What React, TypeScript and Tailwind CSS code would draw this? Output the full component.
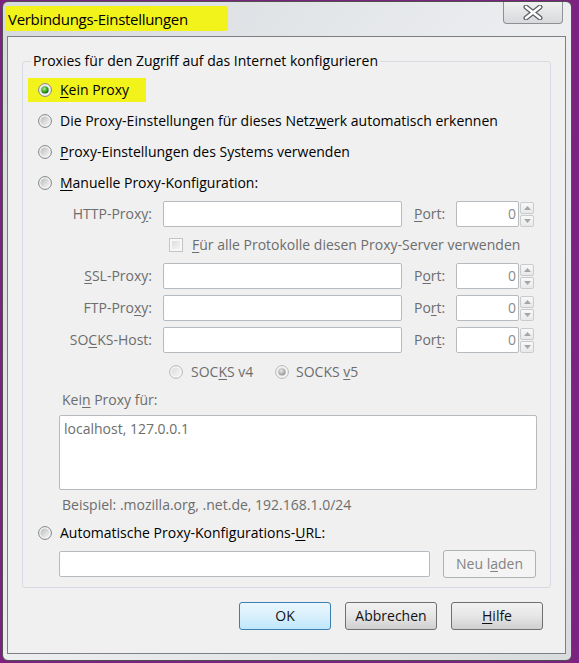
import React from 'react';

const font = { fontFamily: '"Open Sans", "Noto Sans", sans-serif' };

function Radio({ checked = false, disabled = false }: { checked?: boolean; disabled?: boolean }) {
  const ring = disabled ? '#b4b7ba' : '#7f8183';
  return (
    <svg width="14" height="14" viewBox="0 0 14 14" className="shrink-0">
      <defs>
        <linearGradient id="rfill" x1="0" y1="0" x2="1" y2="1">
          <stop offset="0" stopColor="#b9bbbd" />
          <stop offset="1" stopColor="#f7f7f7" />
        </linearGradient>
        <linearGradient id="rfilld" x1="0" y1="0" x2="1" y2="1">
          <stop offset="0" stopColor="#d9dadb" />
          <stop offset="1" stopColor="#f7f7f7" />
        </linearGradient>
        <radialGradient id="rgreen" cx="0.4" cy="0.35" r="0.7">
          <stop offset="0" stopColor="#b6f59c" />
          <stop offset="0.5" stopColor="#3fae24" />
          <stop offset="1" stopColor="#0f5d06" />
        </radialGradient>
        <radialGradient id="rgray" cx="0.4" cy="0.35" r="0.7">
          <stop offset="0" stopColor="#e8e8e8" />
          <stop offset="1" stopColor="#8c8c8c" />
        </radialGradient>
      </defs>
      <circle cx="7" cy="7" r="6.4" fill="#f5f5f5" stroke={ring} strokeWidth="1" />
      <circle cx="7" cy="7" r="4.6" fill={disabled ? 'url(#rfilld)' : 'url(#rfill)'} />
      {checked && (
        <circle cx="7" cy="7" r="3.6" fill={disabled ? 'url(#rgray)' : 'url(#rgreen)'} />
      )}
    </svg>
  );
}

function Checkbox() {
  return (
    <div className="w-[14px] h-[14px] shrink-0 border border-[#c2c4c6] bg-[#f7f7f7] p-[2px]">
      <div className="w-full h-full bg-gradient-to-br from-[#dedede] to-[#f4f4f4]" />
    </div>
  );
}

function Field({ w }: { w: string }) {
  return <div className={`${w} h-[26px] bg-white border border-[#b6bbbf] rounded-[2px]`} />;
}

function PortSpin() {
  return (
    <div className="flex items-center">
      <div className="w-[63px] h-[26px] bg-white border border-[#b6bbbf] rounded-[2px] flex items-center justify-end pr-[2px] text-[#8a8a8a]">
        0
      </div>
      <div className="flex flex-col gap-[1px] ml-[1px]">
        <div className="w-[14px] h-[12px] border border-[#c9cccf] rounded-[2px] bg-gradient-to-b from-[#f8f8f8] to-[#e9e9e9] flex items-center justify-center">
          <svg width="7" height="4" viewBox="0 0 7 4"><path d="M0 4 L3.5 0 L7 4 Z" fill="#a4a7aa" /></svg>
        </div>
        <div className="w-[14px] h-[12px] border border-[#c9cccf] rounded-[2px] bg-gradient-to-b from-[#f8f8f8] to-[#e9e9e9] flex items-center justify-center">
          <svg width="7" height="4" viewBox="0 0 7 4"><path d="M0 0 L7 0 L3.5 4 Z" fill="#a4a7aa" /></svg>
        </div>
      </div>
    </div>
  );
}

function ProxyRow({ label, port }: { label: React.ReactNode; port: React.ReactNode }) {
  return (
    <div className="h-[32px] flex items-center pl-[22px] text-[#6d6d6d]">
      <div className="w-[92px] text-right whitespace-nowrap">{label}</div>
      <div className="ml-[11px]">
        <Field w="w-[239px]" />
      </div>
      <div className="ml-[12px] w-[42px]">{port}</div>
      <PortSpin />
    </div>
  );
}

function Button({ children, primary = false }: { children: React.ReactNode; primary?: boolean }) {
  return (
    <div
      className={`w-[92px] h-[28px] rounded-[3px] border flex items-center justify-center text-[#111] ${
        primary
          ? 'border-[#3c7fb1] bg-gradient-to-b from-[#eaf6fd] via-[#d9f0fc] to-[#bee6fd]'
          : 'border-[#707070] bg-gradient-to-b from-[#f2f2f2] via-[#e6e6e6] to-[#cfcfcf]'
      }`}
    >
      {children}
    </div>
  );
}

export default function App() {
  return (
    <div className="w-[579px] h-[663px] bg-[#7c2380] pt-[1px] pl-[2px] text-[14px] leading-[20px]" style={font}>
      <div className="w-[570px] h-[660px] rounded-[6px] border border-[#4f4f4f] bg-gradient-to-br from-[#d6d9de] via-[#eceef0] to-[#d9dcdf]">
        {/* title bar */}
        <div className="h-[34px] flex items-start justify-between">
          <div className="ml-[2px] mt-[4px] h-[25px] w-[223px] bg-[#f3f31c] rounded-[3px] flex items-center pl-[3px] text-[15px] tracking-[-0.3px] text-black">
            Verbindungs-Einstellungen
          </div>
          <div className="mr-[8px] w-[60px] h-[22px] rounded-b-[4px] border border-t-0 border-[#8d9095] bg-gradient-to-b from-[#f0f0f0] to-[#d8d9db] flex items-center justify-center">
            <svg width="22" height="15" viewBox="0 0 22 15">
              <path d="M4 2 L18 13 M18 2 L4 13" stroke="#5a5d62" strokeWidth="5" strokeLinecap="round" />
              <path d="M4 2 L18 13 M18 2 L4 13" stroke="#ffffff" strokeWidth="2.6" strokeLinecap="round" />
            </svg>
          </div>
        </div>

        {/* client area */}
        <div className="ml-[4px] w-[559px] h-[618px] border border-[#7d7f82] bg-[#f0f0f0]">
          <fieldset className="mx-[14px] mt-[14px] border border-[#d5dbe0] rounded-[3px] pl-[15px] pr-[10px] pb-[9px] pt-[3px]">
            <legend className="ml-[-7px] px-[2px] text-black">Proxies für den Zugriff auf das Internet konfigurieren</legend>

            <div className="h-[31px] flex items-center">
              <div className="ml-[-10px] h-[24px] w-[118px] bg-[#f3f31c] flex items-center pl-[10px] gap-[8px]">
                <Radio checked />
                <span className="text-black"><u className="underline-offset-2">K</u>ein Proxy</span>
              </div>
            </div>
            <div className="h-[31px] flex items-center gap-[8px] text-black">
              <Radio />
              <span>Die Proxy-Einstellungen für dieses Netz<u className="underline-offset-2">w</u>erk automatisch erkennen</span>
            </div>
            <div className="h-[31px] flex items-center gap-[8px] text-black">
              <Radio />
              <span><u className="underline-offset-2">P</u>roxy-Einstellungen des Systems verwenden</span>
            </div>
            <div className="h-[31px] flex items-center gap-[8px] text-black">
              <Radio />
              <span><u className="underline-offset-2">M</u>anuelle Proxy-Konfiguration:</span>
            </div>

            <ProxyRow label={<>HTTP-Prox<u className="underline-offset-2">y</u>:</>} port={<><u className="underline-offset-2">P</u>ort:</>} />
            <div className="h-[30px] flex items-center pl-[131px] gap-[9px] text-[#6d6d6d]">
              <Checkbox />
              <span><u className="underline-offset-2">F</u>ür alle Protokolle diesen Proxy-Server verwenden</span>
            </div>
            <ProxyRow label={<><u className="underline-offset-2">S</u>SL-Proxy:</>} port={<>P<u className="underline-offset-2">o</u>rt:</>} />
            <ProxyRow label={<>FTP-Pro<u className="underline-offset-2">x</u>y:</>} port={<>Po<u className="underline-offset-2">r</u>t:</>} />
            <ProxyRow label={<>SO<u className="underline-offset-2">C</u>KS-Host:</>} port={<>Por<u className="underline-offset-2">t</u>:</>} />

            <div className="h-[32px] flex items-center pl-[131px] text-[#6d6d6d]">
              <Radio disabled />
              <span className="ml-[8px] w-[84px]">SOC<u className="underline-offset-2">K</u>S v4</span>
              <Radio disabled checked />
              <span className="ml-[7px]">SOCKS <u className="underline-offset-2">v</u>5</span>
            </div>

            <div className="h-[24px] flex items-center pl-[24px] text-[#6d6d6d]">
              Kei<u className="underline-offset-2">n</u>&nbsp;Proxy für:
            </div>
            <div className="mt-[3px] ml-[21px] w-[478px] h-[75px] bg-white border border-[#b6bbbf] rounded-[2px] px-[4px] py-[3px] text-[#6d6d6d]">
              localhost, 127.0.0.1
            </div>
            <div className="h-[30px] flex items-center pl-[24px] text-[#6d6d6d]">
              Beispiel: .mozilla.org, .net.de, 192.168.1.0/24
            </div>
            <div className="h-[26px] flex items-center gap-[8px] text-black">
              <Radio />
              <span>Automatische Proxy-Konfigurations-<u className="underline-offset-2">U</u>RL:</span>
            </div>
            <div className="mt-[4px] h-[28px] flex items-center pl-[21px]">
              <Field w="w-[371px]" />
              <div className="ml-[13px] w-[93px] h-[28px] rounded-[3px] border border-[#adb2b5] bg-[#f4f4f4] flex items-center justify-center text-[#838383]">
                Neu l<u className="underline-offset-2">a</u>den
              </div>
            </div>
          </fieldset>

          {/* dialog buttons */}
          <div className="mt-[14px] mr-[22px] flex justify-end gap-[14px]">
            <Button primary>OK</Button>
            <Button>Abbrechen</Button>
            <Button><u className="underline-offset-2">H</u>ilfe</Button>
          </div>
        </div>
      </div>
    </div>
  );
}
